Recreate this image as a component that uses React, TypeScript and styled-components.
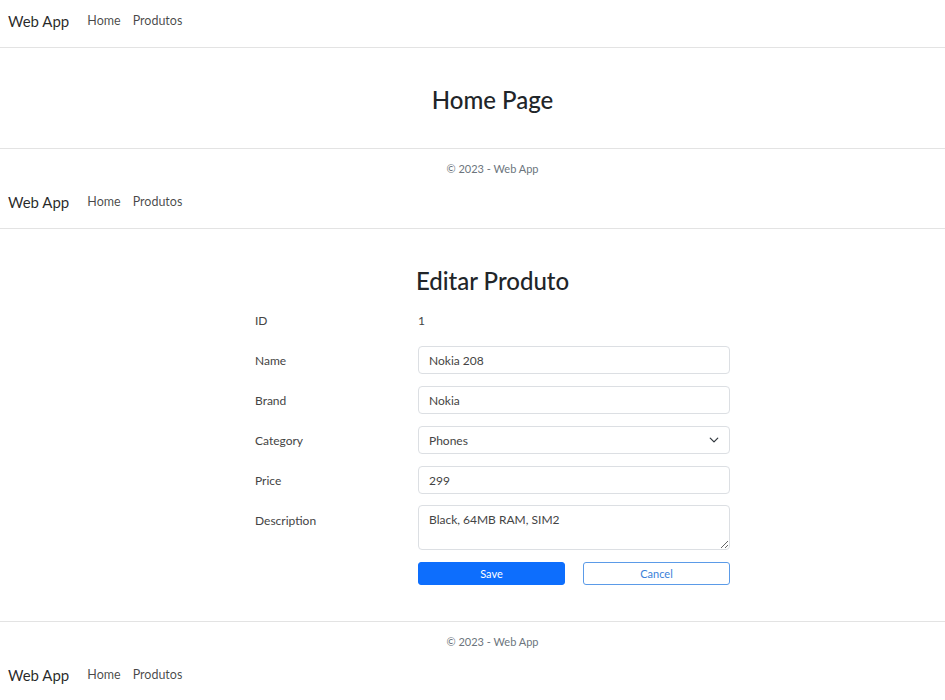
import React from "react";
import styled, { createGlobalStyle } from "styled-components";

const Global = createGlobalStyle`
  html, body { margin: 0; padding: 0; background: #fff; }
  body { font-family: "Segoe UI", Lato, "Liberation Sans", sans-serif; color: #212529; }
  * { box-sizing: border-box; }
`;

const Nav = styled.nav`
  height: 48px;
  border-bottom: 1px solid #e3e3e3;
  display: flex;
  align-items: center;
  padding: 0 0 6px 8px;
  gap: 18px;
`;

const Brand = styled.a`
  font-size: 15px;
  color: rgba(0, 0, 0, 0.85);
  text-decoration: none;
`;

const Links = styled.div`
  display: flex;
  gap: 12px;
`;

const NavLink = styled.a`
  font-size: 12.5px;
  color: rgba(0, 0, 0, 0.72);
  text-decoration: none;
`;

const Main = styled.main<{ $h: number }>`
  min-height: ${(p) => p.$h}px;
  padding-left: 40px;
  padding-top: 36px;
  display: flex;
  flex-direction: column;
  align-items: center;
`;

const Title = styled.h1`
  margin: 0;
  font-size: 24px;
  font-weight: 500;
  line-height: 32px;
  color: #212529;
`;

const Footer = styled.footer`
  border-top: 1px solid #e3e3e3;
  height: 33px;
  padding-left: 40px;
  display: flex;
  justify-content: center;
  padding-top: 13px;
  font-size: 11px;
  line-height: 14px;
  color: #6c757d;
`;

const Form = styled.form`
  width: 475px;
  margin-top: 3px;
  display: grid;
  grid-template-columns: 163px 312px;
`;

const Label = styled.label<{ $top?: boolean }>`
  font-size: 12px;
  color: #444;
  display: flex;
  align-items: ${(p) => (p.$top ? "flex-start" : "center")};
  padding-top: ${(p) => (p.$top ? "13px" : "0")};
  height: ${(p) => (p.$top ? "55px" : "40px")};
`;

const Value = styled.div`
  font-size: 12px;
  color: #444;
  display: flex;
  align-items: center;
  height: 40px;
`;

const Field = styled.div<{ $top?: boolean }>`
  display: flex;
  align-items: ${(p) => (p.$top ? "flex-start" : "center")};
  padding-top: ${(p) => (p.$top ? "5px" : "0")};
  height: ${(p) => (p.$top ? "55px" : "40px")};
`;

const Input = styled.input`
  width: 100%;
  height: 28px;
  border: 1px solid #dcdfe3;
  border-radius: 4px;
  padding: 0 10px;
  font: inherit;
  font-size: 12px;
  color: #444;
  outline: none;
`;

const SelectBox = styled.div`
  width: 100%;
  height: 28px;
  border: 1px solid #dcdfe3;
  border-radius: 4px;
  padding: 0 10px;
  font-size: 12px;
  color: #444;
  display: flex;
  align-items: center;
  justify-content: space-between;
`;

const TextArea = styled.textarea`
  width: 100%;
  height: 45px;
  border: 1px solid #dcdfe3;
  border-radius: 4px;
  padding: 6px 10px;
  font: inherit;
  font-size: 12px;
  color: #444;
  resize: vertical;
  outline: none;
`;

const Buttons = styled.div`
  grid-column: 2;
  display: flex;
  gap: 18px;
  padding-top: 7px;
`;

const Button = styled.button<{ $primary?: boolean }>`
  flex: 1;
  height: 23px;
  border-radius: 3px;
  font: inherit;
  font-size: 11px;
  border: 1px solid ${(p) => (p.$primary ? "#0d6efd" : "#5b9be8")};
  background: ${(p) => (p.$primary ? "#0d6efd" : "#fff")};
  color: ${(p) => (p.$primary ? "#fff" : "#3b7fd9")};
`;

const Header = () => (
  <Nav>
    <Brand>Web App</Brand>
    <Links>
      <NavLink>Home</NavLink>
      <NavLink>Produtos</NavLink>
    </Links>
  </Nav>
);

const Chevron = () => (
  <svg width="10" height="10" viewBox="0 0 16 16" fill="none" stroke="#343a40" strokeWidth="2" strokeLinecap="round" strokeLinejoin="round">
    <path d="M2 5l6 6 6-6" />
  </svg>
);

export default function App() {
  return (
    <>
      <Global />
      <Header />
      <Main $h={100}>
        <Title>Home Page</Title>
      </Main>
      <Footer>© 2023 - Web App</Footer>
      <Header />
      <Main $h={392}>
        <Title>Editar Produto</Title>
        <Form>
          <Label>ID</Label>
          <Value>1</Value>
          <Label>Name</Label>
          <Field><Input defaultValue="Nokia 208" /></Field>
          <Label>Brand</Label>
          <Field><Input defaultValue="Nokia" /></Field>
          <Label>Category</Label>
          <Field>
            <SelectBox>
              <span>Phones</span>
              <Chevron />
            </SelectBox>
          </Field>
          <Label>Price</Label>
          <Field><Input defaultValue="299" /></Field>
          <Label $top>Description</Label>
          <Field $top><TextArea defaultValue="Black, 64MB RAM, SIM2" /></Field>
          <Buttons>
            <Button type="button" $primary>Save</Button>
            <Button type="button">Cancel</Button>
          </Buttons>
        </Form>
      </Main>
      <Footer>© 2023 - Web App</Footer>
      <Header />
    </>
  );
}
